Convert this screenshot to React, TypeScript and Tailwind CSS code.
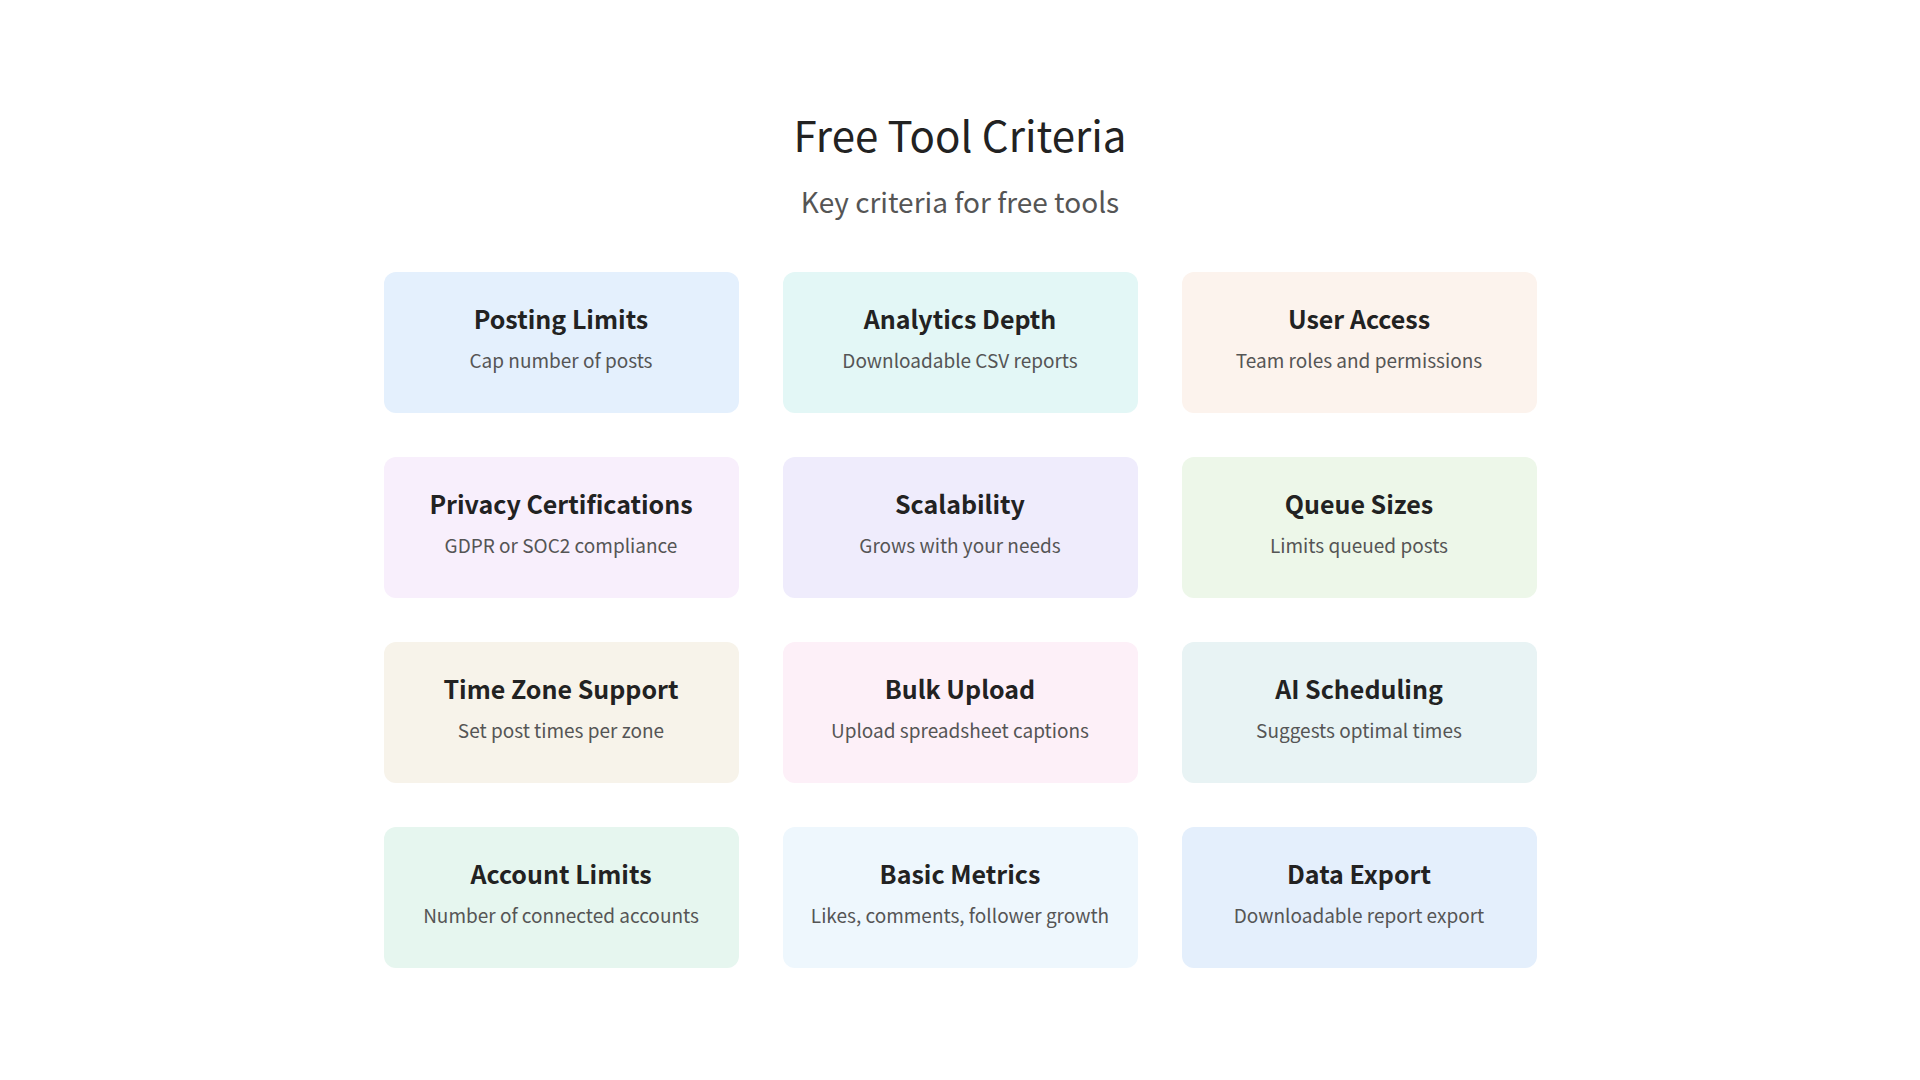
const items = [
  ["Posting Limits", "Cap number of posts", "bg-[#e4f0fd]"],
  ["Analytics Depth", "Downloadable CSV reports", "bg-[#e3f7f6]"],
  ["User Access", "Team roles and permissions", "bg-[#fcf3ed]"],
  ["Privacy Certifications", "GDPR or SOC2 compliance", "bg-[#f8effc]"],
  ["Scalability", "Grows with your needs", "bg-[#efecfc]"],
  ["Queue Sizes", "Limits queued posts", "bg-[#edf7e9]"],
  ["Time Zone Support", "Set post times per zone", "bg-[#f7f3ea]"],
  ["Bulk Upload", "Upload spreadsheet captions", "bg-[#fdf0f8]"],
  ["AI Scheduling", "Suggests optimal times", "bg-[#e8f3f4]"],
  ["Account Limits", "Number of connected accounts", "bg-[#e6f6ef]"],
  ["Basic Metrics", "Likes, comments, follower growth", "bg-[#eef7fd]"],
  ["Data Export", "Downloadable report export", "bg-[#e4effc]"],
];

export default function App() {
  return (
    <div className="w-[1920px] h-[1080px] bg-white flex flex-col items-center pt-[106px]" style={{ fontFamily: '"Noto Sans CJK SC", "Noto Sans", sans-serif' }}>
      <h1 className="text-[42px] leading-[56px] text-[#222]">Free Tool Criteria</h1>
      <p className="mt-[21px] text-[28px] leading-[36px] text-[#555]">Key criteria for free tools</p>
      <div className="mt-[53px] grid grid-cols-[355px_355px_355px] gap-x-[44px] gap-y-[44px]">
        {items.map(([t, d, c]) => (
          <div key={t} className={`${c} h-[141px] rounded-[12px] flex flex-col items-center pt-[29px]`}>
            <div className="text-[25px] leading-[34px] font-bold text-[#222]">{t}</div>
            <div className="mt-[12px] text-[19px] leading-[26px] text-[#555]">{d}</div>
          </div>
        ))}
      </div>
    </div>
  );
}
